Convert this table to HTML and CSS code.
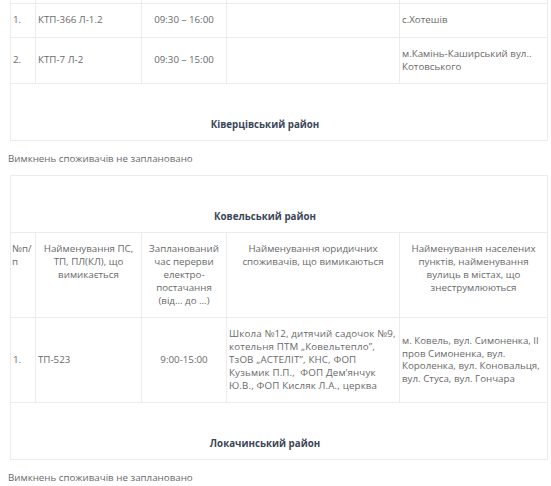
FILE: index.html
```html
<!DOCTYPE html>
<html lang="uk">
<head>
<meta charset="utf-8">
<title>Графік відключень</title>
<link rel="stylesheet" href="styles.css">
</head>
<body>
<table class="grid">
  <colgroup>
    <col class="c1"><col class="c2"><col class="c3"><col class="c4"><col class="c5">
  </colgroup>
  <tr class="cut"><td></td><td></td><td></td><td></td><td></td></tr>
  <tr>
    <td>1.</td>
    <td>КТП-366 Л-1.2</td>
    <td class="center">09:30 – 16:00</td>
    <td></td>
    <td>с.Хотешів</td>
  </tr>
  <tr>
    <td>2.</td>
    <td>КТП-7 Л-2</td>
    <td class="center">09:30 – 15:00</td>
    <td></td>
    <td>м.Камінь-Каширський вул.. Котовського</td>
  </tr>
  <tr>
    <td class="district" colspan="5">Ківерцівський район</td>
  </tr>
</table>
<p class="note">Вимкнень споживачів не заплановано</p>
<table class="grid">
  <colgroup>
    <col class="c1"><col class="c2"><col class="c3"><col class="c4"><col class="c5">
  </colgroup>
  <tr>
    <td class="district" colspan="5">Ковельський район</td>
  </tr>
  <tr class="head">
    <td class="first">№п/п</td>
    <td>Найменування ПС, ТП, ПЛ(КЛ), що вимикається</td>
    <td>Запланований час перерви електро-постачання (від… до …)</td>
    <td>Найменування юридичних споживачів, що вимикаються</td>
    <td>Найменування населених пунктів, найменування вулиць в містах, що знеструмлюються</td>
  </tr>
  <tr>
    <td>1.</td>
    <td>ТП-523</td>
    <td class="center">9:00-15:00</td>
    <td class="wide">Школа №12, дитячий садочок №9, котельня ПТМ „Ковельтепло”, ТзОВ „АСТЕЛІТ”, КНС, ФОП<br>Кузьмик П.П.,&nbsp; ФОП Дем’янчук Ю.В., ФОП Кисляк Л.А., церква</td>
    <td>м. Ковель, вул. Симоненка, ІІ пров Симоненка, вул. Короленка, вул. Коновальця, вул. Стуса, вул. Гончара</td>
  </tr>
  <tr>
    <td class="district" colspan="5">Локачинський район</td>
  </tr>
</table>
<p class="note">Вимкнень споживачів не заплановано</p>
<div class="edge"></div>
</body>
</html>
```
FILE: styles.css
```css
html, body {
  margin: 0;
  padding: 0;
  background: #fff;
  overflow: hidden;
}
body {
  padding-left: 8px;
  font-family: "Open Sans", "Noto Sans", sans-serif;
  font-size: 9.75px;
  line-height: 12.8px;
  color: #6a6a6a;
}
.grid {
  border-collapse: collapse;
  table-layout: fixed;
  width: 537px;
  margin-left: 2px;
}
.c1 { width: 25px; }
.c2 { width: 106px; }
.c3 { width: 85px; }
.c4 { width: 173px; }
.c5 { width: 148px; }
.grid td {
  border: 1px solid #ececec;
  padding: 10px 2px;
  vertical-align: middle;
  text-align: left;
}
.grid .cut td {
  border-top: none;
  height: 3px;
  padding: 0;
}
.grid td.center { text-align: center; }
.grid td.wide { letter-spacing: 0.15px; }
.grid .head td {
  vertical-align: top;
  text-align: center;
}
.grid .head td.first { text-align: left; padding-left: 1px; padding-right: 0; }
.grid td.district {
  padding: 34px 30px 9px 2px;
  line-height: 13px;
  text-align: center;
  font-weight: 700;
  color: #3b4658;
}
.note {
  margin: 11px 0 9px;
  line-height: 14px;
}
.edge {
  height: 3px;
  margin-left: -8px;
  background: #333;
}
```
